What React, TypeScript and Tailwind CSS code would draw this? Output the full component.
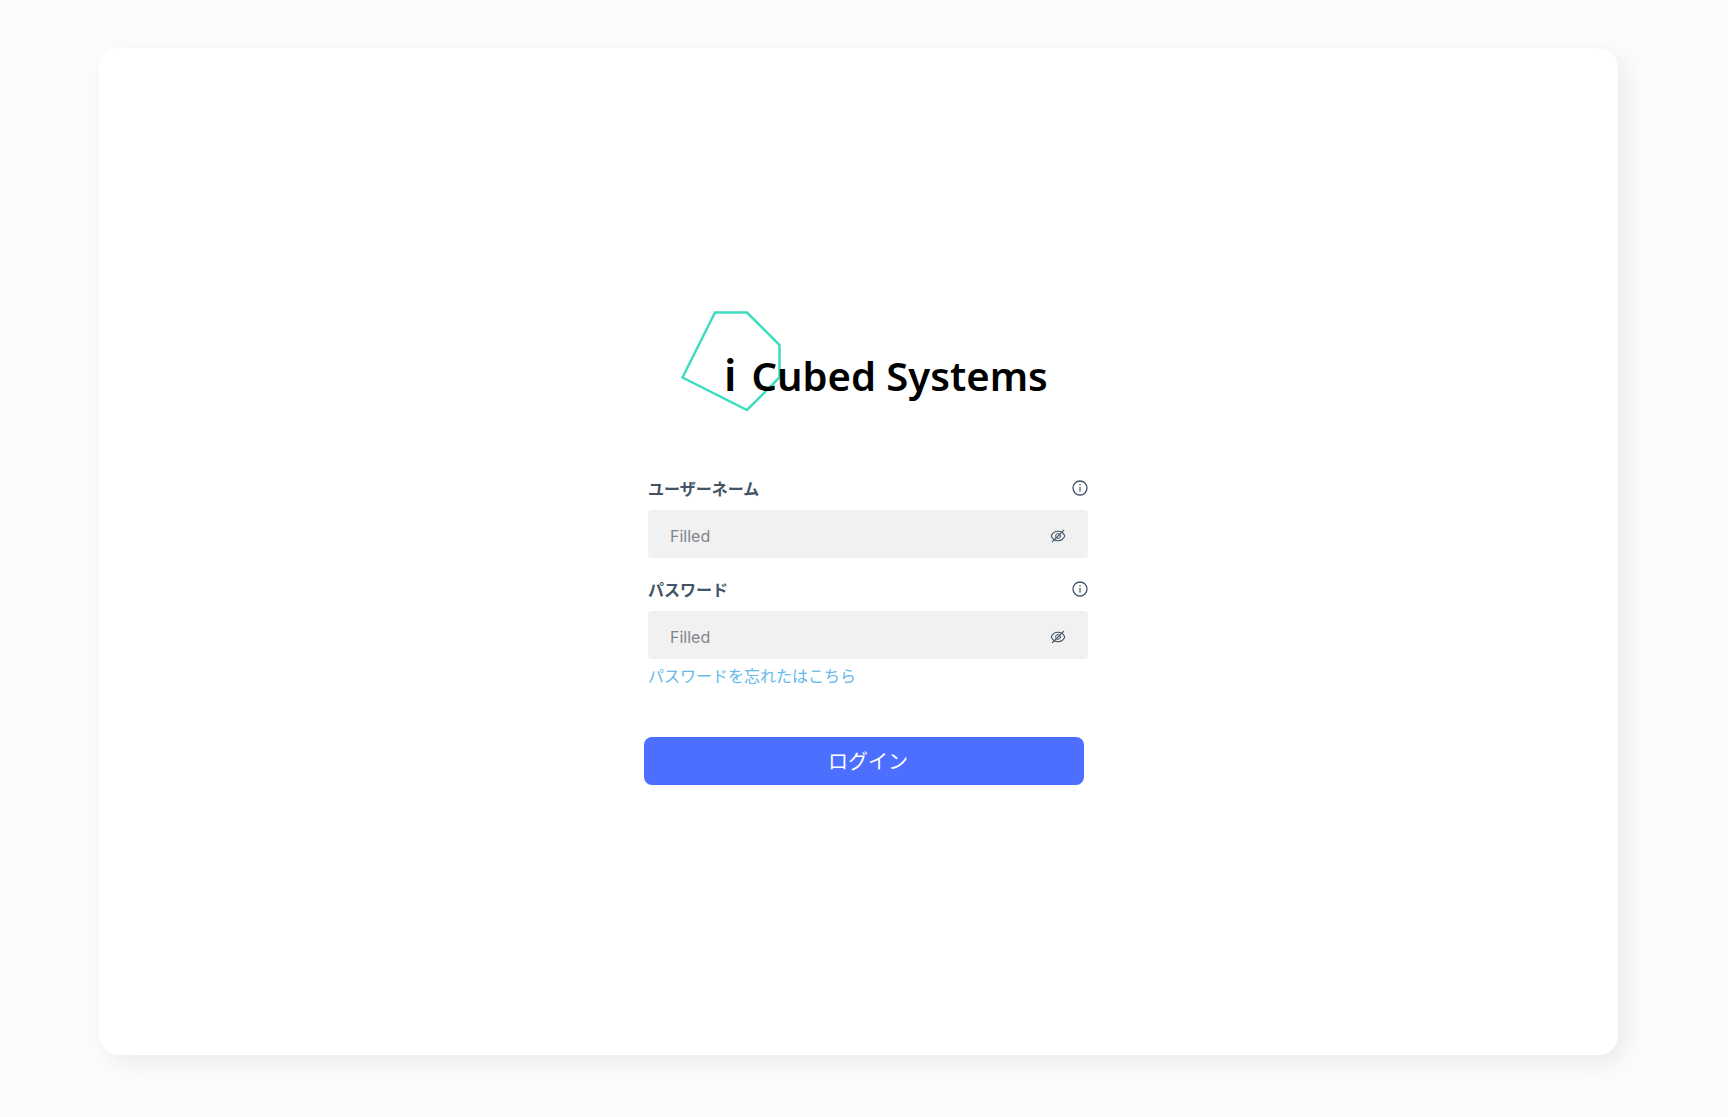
import { useId } from "react";

const jp = "font-['Noto_Sans_CJK_JP',sans-serif]";

function InfoIcon() {
  return (
    <svg width="16" height="16" viewBox="0 0 16 16" fill="none" stroke="#425466" aria-hidden="true">
      <circle cx="8" cy="8" r="7" strokeWidth="1.3" />
      <path d="M8 6.8v5" strokeWidth="1.4" strokeOpacity="0.85" />
      <path d="M8 4v1.5" strokeWidth="1.4" strokeOpacity="0.85" />
    </svg>
  );
}

function HiddenIcon() {
  return (
    <svg width="16" height="16" viewBox="0 0 16 16" fill="none" stroke="#425466" strokeLinecap="round" aria-hidden="true">
      <path d="M1.3 8C2.4 5 5 3.3 8 3.3S13.6 5 14.7 8C13.6 11 11 12.7 8 12.7S2.4 11 1.3 8Z" strokeWidth="1.1" />
      <circle cx="8" cy="8" r="2.4" strokeWidth="1" />
      <path d="M2.4 13.6 13.6 2.4" strokeWidth="1.2" />
    </svg>
  );
}

function Logo() {
  return (
    <div className="ml-9 flex h-[102px] items-end" role="img" aria-label="i Cubed Systems">
      <svg className="shrink-0" width="102" height="102" viewBox="0 0 102 102" fill="none">
        <path d="M35 2.5h32l32.500 32.500v32.500l-32.500 32.500-64.500-32.500z" stroke="#3EDCC0" strokeWidth="2.5" />
      </svg>
      <div className="relative -ml-[58px] flex items-baseline gap-[15px] whitespace-nowrap font-['Noto_Sans',sans-serif] font-semibold leading-[72px] text-black">
        <span className="text-[44px]">i</span>
        <span className="text-[40px]">Cubed Systems</span>
      </div>
    </div>
  );
}

function Field({ label, type }: { label: string; type: string }) {
  const id = useId();
  return (
    <div className="flex flex-col gap-[11px]">
      <div className="flex items-center justify-between">
        <label htmlFor={id} className={`${jp} text-base font-bold leading-[22px] text-[#425466]`}>
          {label}
        </label>
        <button type="button" aria-label={`${label} info`}>
          <InfoIcon />
        </button>
      </div>
      <div className="flex h-12 items-center rounded bg-[#f1f1f1] px-[22px] pt-1">
        <input
          id={id}
          type={type}
          placeholder="Filled"
          className="min-w-0 flex-1 bg-transparent font-['Inter',sans-serif] text-base leading-6 text-[#425466] outline-none placeholder:text-[#7f868c]"
        />
        <button type="button" aria-label={`${label} visibility`}>
          <HiddenIcon />
        </button>
      </div>
    </div>
  );
}

export default function App() {
  return (
    <div className="flex min-h-screen bg-[#fbfcfe] pt-12 pr-[110px] pb-[62px] pl-[99px]">
      <main className="flex flex-1 flex-col items-center justify-center rounded-[20px] bg-white pb-[9px] pl-[11px] shadow-[8px_8px_24px_rgba(0,0,0,0.07)]">
        <form className="w-full max-w-[440px]" onSubmit={(e) => e.preventDefault()}>
          <Logo />
          <div className="mt-[65px] -mr-1 ml-1 flex flex-col gap-5">
            <Field label="ユーザーネーム" type="text" />
            <Field label="パスワード" type="password" />
          </div>
          <a href="#reset" className={`${jp} mt-1 ml-1 block text-base leading-6 text-[#63b9e9]`}>
            パスワードを忘れたはこちら
          </a>
          <button type="submit" className={`${jp} mt-[50px] block h-12 w-full rounded-lg bg-[#4c6fff] pl-2 text-xl text-white`}>
            ログイン
          </button>
        </form>
      </main>
    </div>
  );
}
